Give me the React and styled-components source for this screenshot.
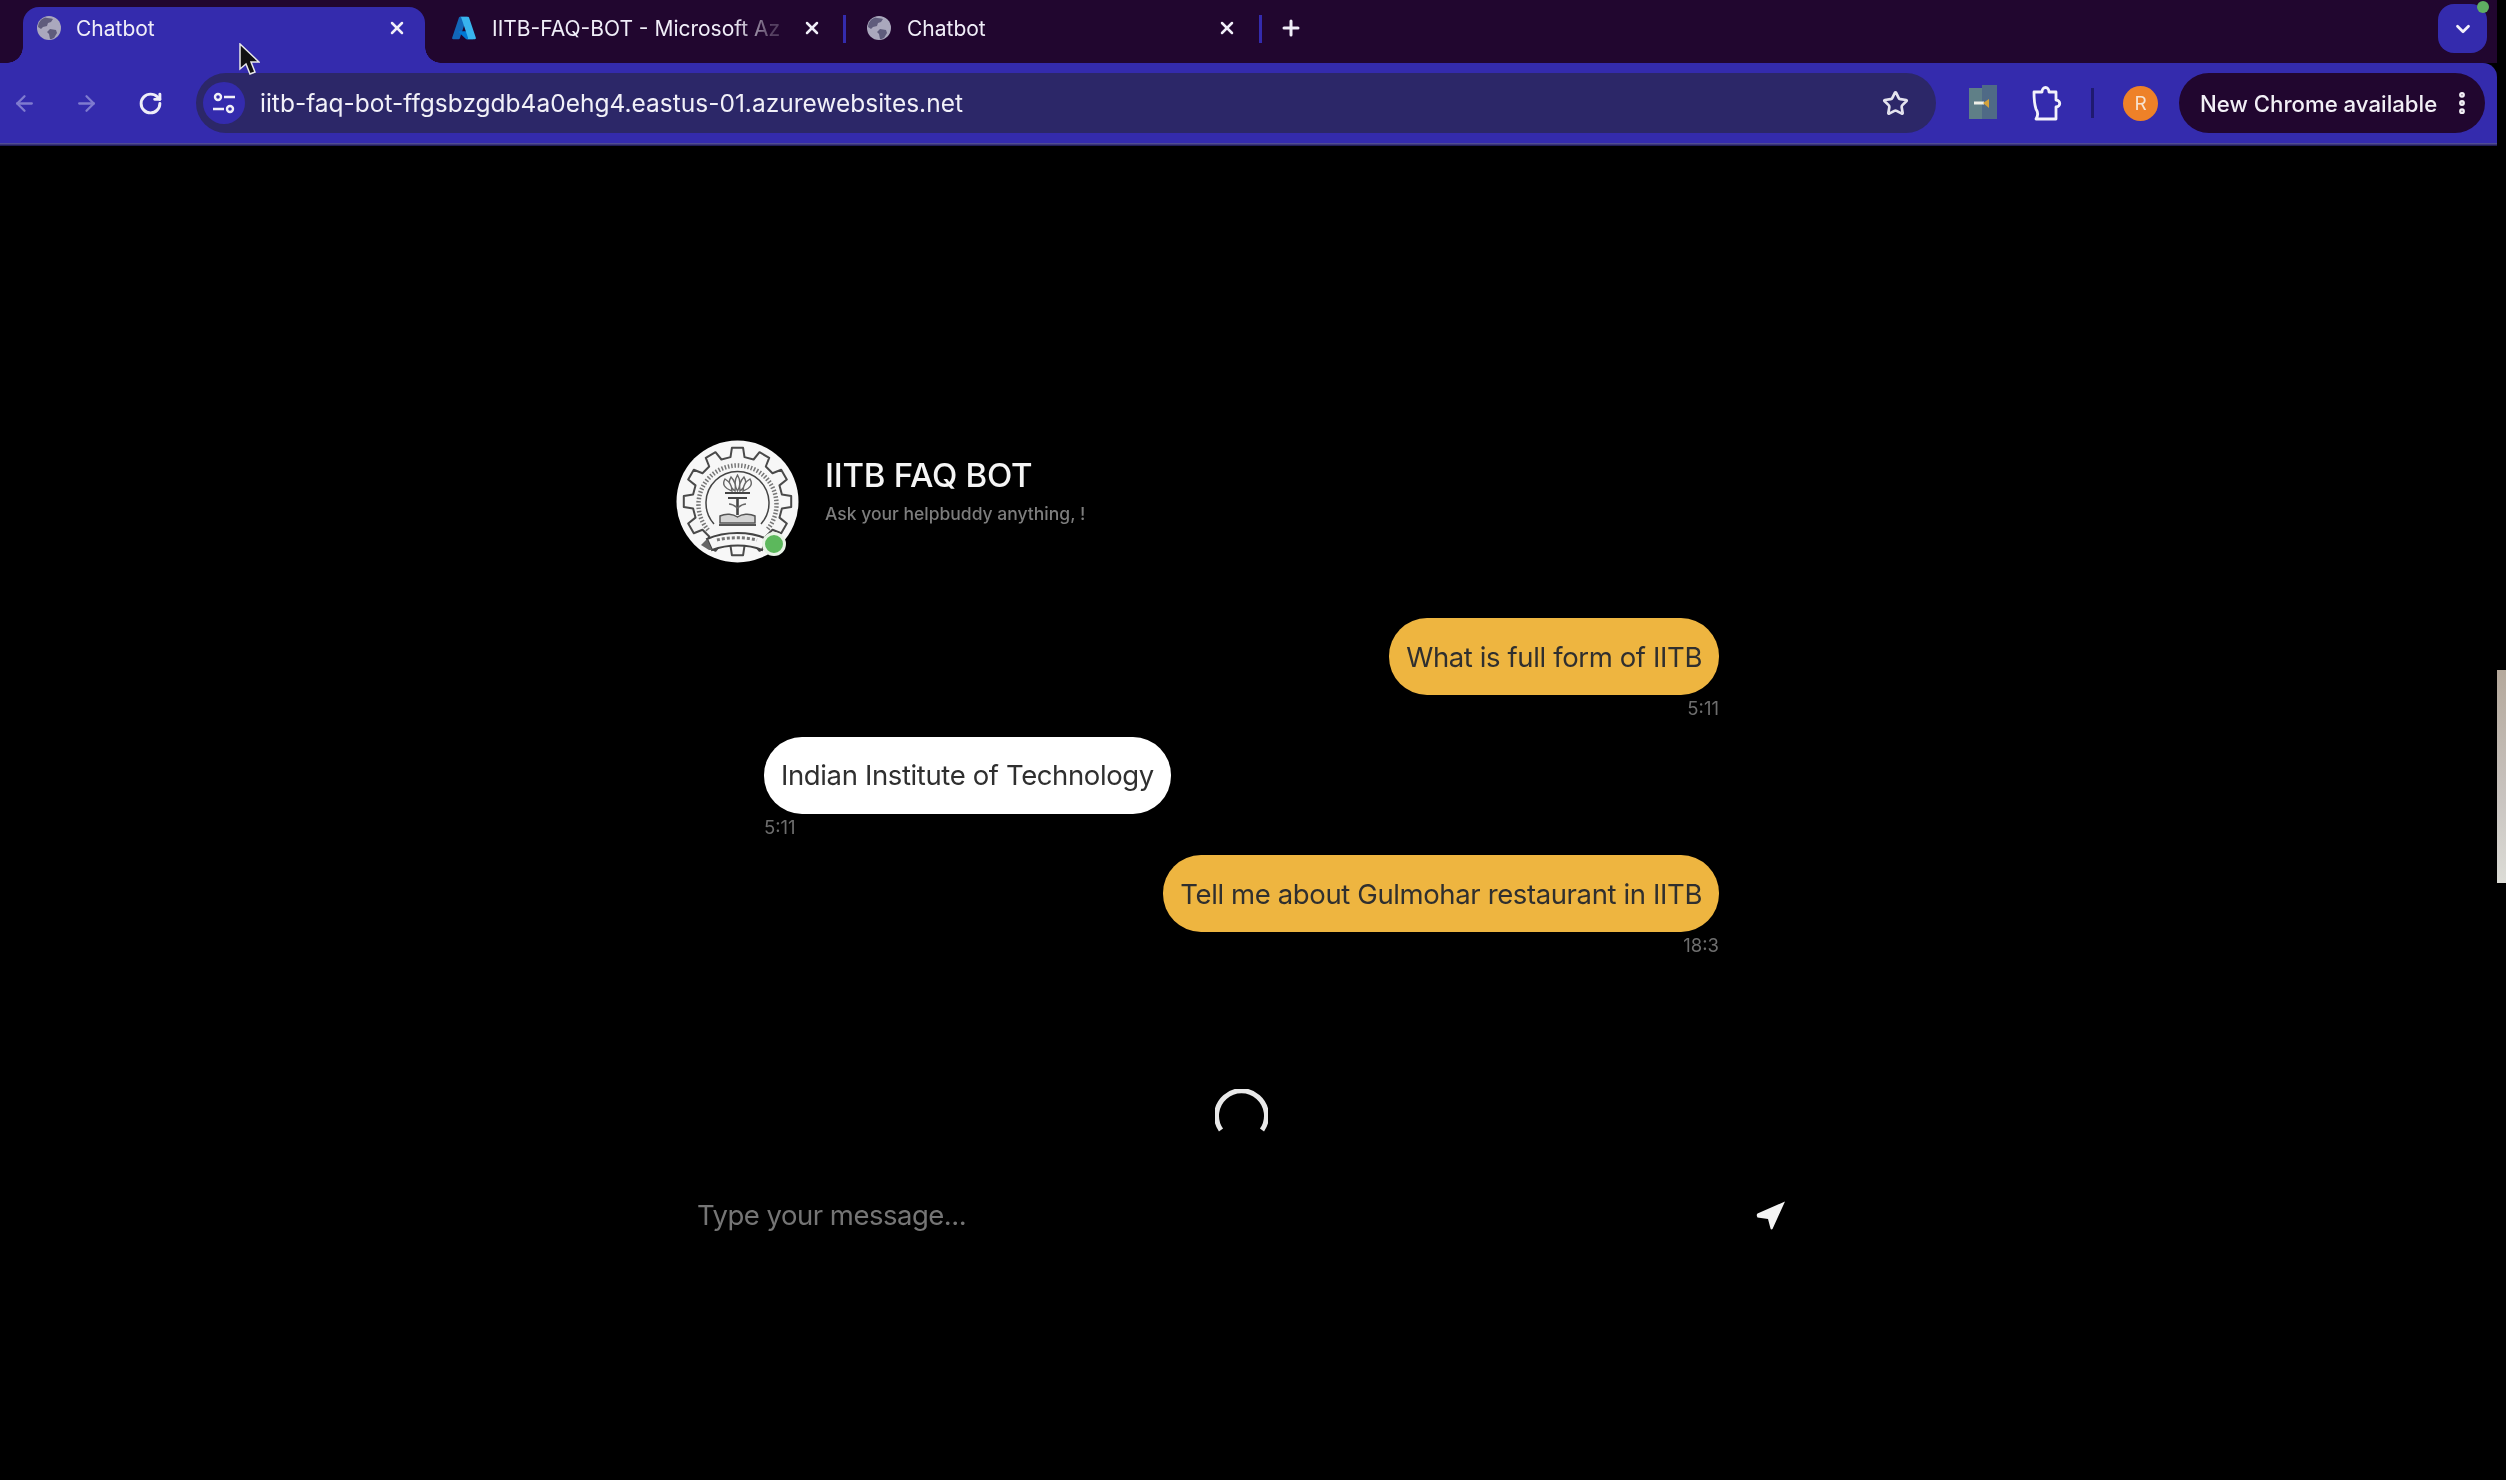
import React from "react";
import styled, { createGlobalStyle } from "styled-components";
import { ArrowLeft, ArrowRight, RotateCw, X, Plus, Star, ChevronDown, EllipsisVertical } from "lucide-react";

const Global = createGlobalStyle`
  html, body { margin: 0; padding: 0; background: #000; }
  body { font-family: Inter, "Liberation Sans", sans-serif; overflow: hidden; }
  input::placeholder { color: #757575; opacity: 1; }
`;

const Screen = styled.div`
  position: relative;
  width: 2506px;
  height: 1480px;
  background: #000;
  overflow: hidden;
  filter: blur(0.6px);
`;

const Browser = styled.header`
  width: 2497px;
  display: flex;
  flex-direction: column;
`;

const TabStrip = styled.div`
  height: 63px;
  background: #21062f;
  display: flex;
  align-items: flex-end;
  padding-left: 23px;
  padding-right: 10px;
`;

const Tab = styled.div`
  position: relative;
  width: ${(p) => p.$w}px;
  height: 56px;
  padding: 0 ${(p) => p.$pr}px 14px ${(p) => p.$pl}px;
  box-sizing: border-box;
  display: flex;
  align-items: center;
  gap: ${(p) => p.$gap}px;
  border-radius: 16px 16px 0 0;
  background: ${(p) => (p.$active ? "#342bad" : "transparent")};
  color: #f0eef8;
  font-size: 21px;
  flex-shrink: 0;
  ${(p) =>
    p.$active &&
    `
    &::before, &::after {
      content: "";
      position: absolute;
      bottom: 0;
      width: 16px;
      height: 16px;
    }
    &::before { left: -16px; background: radial-gradient(circle at 0 0, #21062f 15.5px, #342bad 16px); }
    &::after { right: -16px; background: radial-gradient(circle at 100% 0, #21062f 15.5px, #342bad 16px); }
  `}
`;

const TabTitle = styled.span`
  flex: 1;
  white-space: nowrap;
  ${(p) =>
    p.$fade &&
    `
    -webkit-mask-image: linear-gradient(to right, #000 82%, rgba(0,0,0,.25) 95%);
    mask-image: linear-gradient(to right, #000 82%, rgba(0,0,0,.25) 95%);
  `}
`;

const TabDivider = styled.div`
  width: 3px;
  height: 28px;
  margin-bottom: 20px;
  background: #342bad;
  flex-shrink: 0;
`;

const NewTab = styled.div`
  margin-left: 17px;
  margin-bottom: 23px;
  display: flex;
  color: #f0eef8;
`;

const Spacer = styled.div`
  flex: 1;
`;

const TabSearch = styled.div`
  position: relative;
  align-self: flex-start;
  margin-top: 4px;
  width: 49px;
  height: 49px;
  border-radius: 16px;
  background: #342bad;
  display: flex;
  align-items: center;
  justify-content: center;
  color: #f4f2fb;
`;

const Notify = styled.span`
  position: absolute;
  top: -3px;
  right: -2px;
  width: 12px;
  height: 12px;
  border-radius: 50%;
  background: #5fae62;
`;

const Toolbar = styled.div`
  height: 80px;
  box-sizing: border-box;
  background: #342bad;
  border-radius: 0 14px 0 0;
  display: flex;
  align-items: center;
  padding: 0 10px 0 12px;
`;

const ToolbarEdge = styled.div`
  height: 3px;
  background: linear-gradient(#5d58a0, #14104a);
`;

const Nav = styled.div`
  width: ${(p) => p.$w}px;
  display: flex;
  color: ${(p) => (p.$dim ? "#7f7bcf" : "#eeedf8")};
  flex-shrink: 0;
`;

const Omnibox = styled.div`
  width: 1740px;
  height: 60px;
  margin-left: 30px;
  border-radius: 30px;
  background: #2c2768;
  display: flex;
  align-items: center;
  box-sizing: border-box;
  padding: 0 27px 0 7px;
  flex-shrink: 0;
`;

const SiteInfo = styled.div`
  width: 42px;
  height: 42px;
  border-radius: 50%;
  background: #342bad;
  display: flex;
  align-items: center;
  justify-content: center;
  flex-shrink: 0;
`;

const Url = styled.span`
  flex: 1;
  margin-left: 15px;
  font-size: 24.5px;
  color: #f1f0f8;
  white-space: nowrap;
`;

const ToolIcon = styled.div`
  display: flex;
  margin-left: ${(p) => p.$ml}px;
  color: #f1f0f8;
  flex-shrink: 0;
`;

const ToolDivider = styled.div`
  width: 3px;
  height: 30px;
  margin-left: 29px;
  background: #1f1a70;
  flex-shrink: 0;
`;

const Avatar = styled.div`
  width: 35px;
  height: 35px;
  margin-left: 29px;
  border-radius: 50%;
  background: #ee8128;
  color: #f7e3cf;
  font-size: 19px;
  display: flex;
  align-items: center;
  justify-content: center;
  flex-shrink: 0;
`;

const UpdatePill = styled.div`
  width: 306px;
  height: 60px;
  margin-left: 21px;
  box-sizing: border-box;
  padding: 0 9px 0 21px;
  border-radius: 30px;
  background: #21062f;
  color: #f2f0f6;
  font-size: 22.2px;
  font-weight: 500;
  display: flex;
  align-items: center;
  justify-content: space-between;
  white-space: nowrap;
  flex-shrink: 0;
`;

const Cursor = styled.svg`
  position: absolute;
  left: 238px;
  top: 43px;
`;

const Scrollbar = styled.div`
  position: absolute;
  right: 0;
  top: 670px;
  width: 9px;
  height: 213px;
  background: linear-gradient(#b4a89b, #c9c4c0 60%, #dcdcd6);
`;

const Chat = styled.main`
  width: 1130px;
  margin-left: 676px;
  padding-top: 294px;
  display: flex;
  flex-direction: column;
`;

const ChatHeader = styled.div`
  display: flex;
  align-items: flex-start;
  height: 123px;
`;

const LogoWrap = styled.div`
  position: relative;
  width: 123px;
  height: 123px;
  flex-shrink: 0;
`;

const Online = styled.span`
  position: absolute;
  left: 86px;
  top: 92px;
  width: 18px;
  height: 18px;
  border-radius: 50%;
  background: #5cb85c;
  border: 3px solid #e8f3e6;
`;

const HeaderText = styled.div`
  margin-left: 26px;
  padding-top: 15px;
`;

const Title = styled.h1`
  margin: 0;
  font-size: 33px;
  line-height: 40px;
  font-weight: 500;
  letter-spacing: -0.25px;
  color: #f5f5f5;
  white-space: nowrap;
`;

const Subtitle = styled.p`
  margin: 9px 0 0;
  font-size: 17.5px;
  line-height: 20px;
  font-weight: 500;
  color: #7d7d7d;
  white-space: nowrap;
`;

const Messages = styled.div`
  margin-top: 55px;
  padding: 0 87px 0 88px;
  display: flex;
  flex-direction: column;
  gap: 18.5px;
`;

const Row = styled.div`
  display: flex;
  flex-direction: column;
  align-items: ${(p) => (p.$mine ? "flex-end" : "flex-start")};
`;

const Bubble = styled.div`
  height: 77px;
  box-sizing: border-box;
  padding: 0 17px;
  border-radius: 38px;
  background: ${(p) => (p.$mine ? "#eeb540" : "#ffffff")};
  color: #2f2f2f;
  font-size: 27.5px;
  letter-spacing: -0.38px;
  display: flex;
  align-items: center;
  white-space: nowrap;
`;

const Time = styled.span`
  margin-top: 4px;
  font-size: 18.5px;
  line-height: 19px;
  color: #6e6e6e;
`;

const SpinnerRow = styled.div`
  margin-top: 134px;
  display: flex;
  justify-content: center;
`;

const Composer = styled.div`
  margin-top: 37px;
  padding: 0 20px 0 21px;
  height: 72px;
  display: flex;
  align-items: center;
`;

const MessageInput = styled.input`
  flex: 1;
  border: 0;
  outline: 0;
  padding: 0;
  background: transparent;
  color: #fff;
  font-family: inherit;
  font-size: 27.5px;
  letter-spacing: -0.5px;
`;

const Globe = () => (
  <svg width="26" height="26" viewBox="0 0 26 26">
    <circle cx="13" cy="13" r="12" fill="#aaa8bd" />
    <path d="M9 2.500c3 1 6 .5 8 1.500l-2 3-3 1-1 3-4 1-2 2-3-2C2.500 7 5 4 9 2.500zM14 14l6 1 1 3-3 5c-2 1-3 1-4 1l-1-5-2-2z" fill="#5f5c7c" />
  </svg>
);

const Azure = () => (
  <svg width="26" height="26" viewBox="0 0 96 96">
    <path d="M33.338 6.544h26.038l-27.03 80.087a4.152 4.152 0 0 1-3.933 2.824H8.149a4.145 4.145 0 0 1-3.928-5.47L29.404 9.368a4.152 4.152 0 0 1 3.934-2.825z" fill="#1267b8" />
    <path d="M71.175 60.261h-41.29a1.911 1.911 0 0 0-1.305 3.309l26.532 24.764a4.171 4.171 0 0 0 2.846 1.121h23.38z" fill="#0078d4" />
    <path d="M66.595 9.364a4.145 4.145 0 0 0-3.928-2.82H33.648a4.146 4.146 0 0 1 3.928 2.82l25.184 74.62a4.146 4.146 0 0 1-3.928 5.472h29.02a4.146 4.146 0 0 0 3.927-5.472z" fill="#38b4ee" />
  </svg>
);

const Tune = () => (
  <svg width="26" height="26" viewBox="0 0 26 26" fill="none" stroke="#f1f0f8" strokeWidth="2.400">
    <circle cx="7" cy="7" r="3" />
    <path d="M13 7h11M2 19h11" />
    <circle cx="19" cy="19" r="3" />
  </svg>
);

const ExtensionTile = () => (
  <svg width="28" height="36" viewBox="0 0 28 36">
    <rect x="0" y="3" width="15" height="31" fill="#5f7f87" />
    <rect x="13" y="0" width="15" height="34" fill="#4f6a86" />
    <path d="M5 18h10" stroke="#eef0e8" strokeWidth="3" />
    <path d="M14 18l6-4v9z" fill="#d3a23c" />
  </svg>
);

const PuzzleOutline = () => (
  <svg width="30" height="38" viewBox="0 0 30 38" fill="none" stroke="#f3f2fb" strokeWidth="2.800" strokeLinejoin="round">
    <path d="M2 8h8c0-6 7-6 7 0h7v8c5 0 5 7 0 7v12H4c2-3 2-7 0-10-1-3-2-12-2-17z" />
  </svg>
);

const gearPath = (() => {
  const teeth = 12;
  const cx = 61.5;
  const cy = 61.5;
  const ro = 54;
  const ri = 45;
  let d = "";
  for (let i = 0; i < teeth; i++) {
    const a = (i / teeth) * Math.PI * 2 - Math.PI / 2;
    const step = (Math.PI * 2) / teeth;
    const pts = [
      [ri, a - step * 0.3],
      [ro, a - step * 0.2],
      [ro, a + step * 0.2],
      [ri, a + step * 0.3],
    ];
    pts.forEach(([r, t], k) => {
      d += `${i === 0 && k === 0 ? "M" : "L"}${(cx + r * Math.cos(t)).toFixed(1)} ${(cy + r * Math.sin(t)).toFixed(1)} `;
    });
  }
  return d + "Z";
})();

const Logo = () => (
  <svg width="123" height="123" viewBox="0 0 123 123">
    <circle cx="61.500" cy="61.500" r="61" fill="#f7f7f7" />
    <path d={gearPath} fill="none" stroke="#4a4a4a" strokeWidth="2" strokeLinejoin="round" />
    <path d="M32 90A39 39 0 1 1 91 90" fill="none" stroke="#777" strokeWidth="4.500" strokeDasharray="1.500 1.800" />
    <path d="M38 84A31.500 31.500 0 1 1 85 84" fill="none" stroke="#444" strokeWidth="1.500" />
    <g fill="#f7f7f7" stroke="#666" strokeWidth="1.400">
      <path d="M61.500 35c-3 5-3 11 0 16 3-5 3-11 0-16z" />
      <path d="M55 37c-3 5-2 10 4 14 1-5 0-10-4-14z" />
      <path d="M68 37c3 5 2 10-4 14-1-5 0-10 4-14z" />
      <path d="M49 39c-3 5-1 9 7 12 0-5-2-9-7-12z" />
      <path d="M74 39c3 5 1 9-7 12 0-5 2-9 7-12z" />
    </g>
    <path d="M49 53h25M52 58h19" stroke="#444" strokeWidth="2.200" />
    <path d="M61.500 58v17" stroke="#444" strokeWidth="2.600" />
    <path d="M53 64c4 0 6 2 8.500 4 2.500-2 4.500-4 8.500-4" fill="none" stroke="#666" strokeWidth="1.500" />
    <path d="M44 76c6-3 13-2 17.500 1 4.500-3 11.500-4 17.500-1v7H44z" fill="#d4d4d4" stroke="#555" strokeWidth="1.500" />
    <path d="M43 85h37" stroke="#555" strokeWidth="1.800" />
    <path d="M31 99c18-8 43-8 60 0l-5 11c-14-6-34-6-50 0z" fill="#f7f7f7" stroke="#444" strokeWidth="2" />
    <path d="M41 100c12-3 28-3 40 0" fill="none" stroke="#777" strokeWidth="3" strokeDasharray="3 2" />
    <path d="M31 99l-6 6 8 5 3 0z" fill="#666" />
  </svg>
);

const Spinner = () => (
  <svg width="53" height="53" viewBox="0 0 53 53" fill="none">
    <path d="M6 41A25 25 0 1 1 47 41" stroke="#e9e9e9" strokeWidth="5" />
  </svg>
);

const SendIcon = () => (
  <svg width="30" height="29" viewBox="0 0 30 29">
    <path d="M29 0.500 L16.500 28 Q15 29 14.500 27.500 L12 18 L1.500 16.500 Q0 14 1.500 12.500 Z" fill="#f4f4f4" />
  </svg>
);

const messages = [
  { id: 1, mine: true, text: "What is full form of IITB", time: "5:11" },
  { id: 2, mine: false, text: "Indian Institute of Technology", time: "5:11" },
  { id: 3, mine: true, text: "Tell me about Gulmohar restaurant in IITB", time: "18:3" },
];

export default function App() {
  return (
    <Screen>
      <Global />
      <Browser>
        <TabStrip>
          <Tab $active $w={402} $pl={13} $pr={18} $gap={14}>
            <Globe />
            <TabTitle>Chatbot</TabTitle>
            <X size={20} strokeWidth={3} />
          </Tab>
          <Tab $w={418} $pl={26} $pr={21} $gap={15}>
            <Azure />
            <TabTitle $fade>IITB-FAQ-BOT - Microsoft Az</TabTitle>
            <X size={20} strokeWidth={3} />
          </Tab>
          <TabDivider />
          <Tab $w={413} $pl={20} $pr={22} $gap={15}>
            <Globe />
            <TabTitle>Chatbot</TabTitle>
            <X size={20} strokeWidth={3} />
          </Tab>
          <TabDivider />
          <NewTab>
            <Plus size={24} strokeWidth={3} />
          </NewTab>
          <Spacer />
          <TabSearch>
            <ChevronDown size={22} strokeWidth={3} />
            <Notify />
          </TabSearch>
        </TabStrip>
        <Toolbar>
          <Nav $w={62} $dim><ArrowLeft size={25} strokeWidth={2.200} /></Nav>
          <Nav $w={64} $dim><ArrowRight size={25} strokeWidth={2.200} /></Nav>
          <Nav $w={28}><RotateCw size={25} strokeWidth={2.800} /></Nav>
          <Omnibox>
            <SiteInfo><Tune /></SiteInfo>
            <Url>iitb-faq-bot-ffgsbzgdb4a0ehg4.eastus-01.azurewebsites.net</Url>
            <Star size={27} strokeWidth={2.400} color="#e4e3ee" />
          </Omnibox>
          <ToolIcon $ml={33}><ExtensionTile /></ToolIcon>
          <ToolIcon $ml={35}><PuzzleOutline /></ToolIcon>
          <ToolDivider />
          <Avatar>R</Avatar>
          <UpdatePill>
            New Chrome available
            <EllipsisVertical size={28} strokeWidth={3} />
          </UpdatePill>
        </Toolbar>
        <ToolbarEdge />
      </Browser>
      <Chat>
        <ChatHeader>
          <LogoWrap>
            <Logo />
            <Online />
          </LogoWrap>
          <HeaderText>
            <Title>IITB FAQ BOT</Title>
            <Subtitle>Ask your helpbuddy anything, !</Subtitle>
          </HeaderText>
        </ChatHeader>
        <Messages>
          {messages.map((m) => (
            <Row key={m.id} $mine={m.mine}>
              <Bubble $mine={m.mine}>{m.text}</Bubble>
              <Time>{m.time}</Time>
            </Row>
          ))}
        </Messages>
        <SpinnerRow><Spinner /></SpinnerRow>
        <Composer>
          <MessageInput placeholder="Type your message..." />
          <SendIcon />
        </Composer>
      </Chat>
      <Scrollbar />
      <Cursor width="22" height="32" viewBox="0 0 22 32">
        <path d="M2 1v25l6-5 4 10 5-2-4-10h8z" fill="#111" stroke="#e8e8e8" strokeWidth="1.500" />
      </Cursor>
    </Screen>
  );
}
